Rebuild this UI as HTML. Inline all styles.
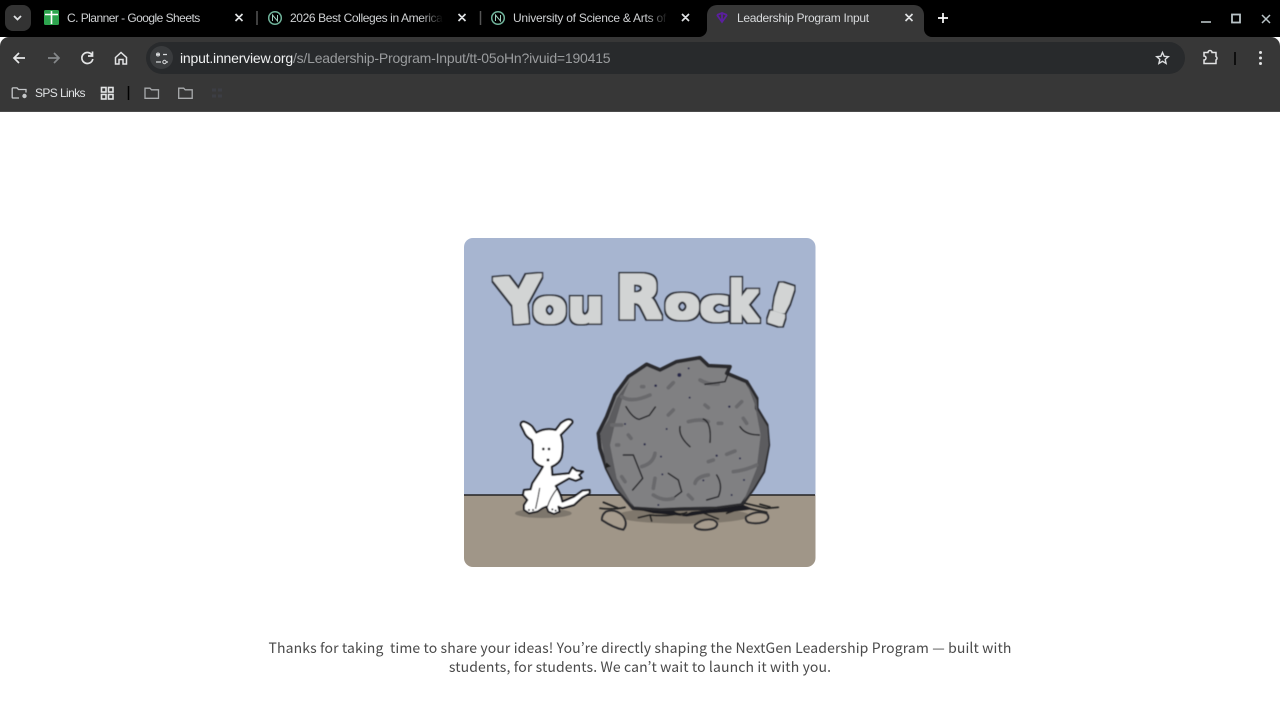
<!DOCTYPE html>
<html><head><meta charset="utf-8"><title>Leadership Program Input</title>
<style>
html,body{margin:0;padding:0;background:#fff;width:1280px;height:719px;overflow:hidden}
body{position:relative;font-family:"Liberation Sans",sans-serif}
.abs{position:absolute}
.tabtxt{position:absolute;top:11px;font-size:12px;line-height:14px;color:#cfd1d3;white-space:nowrap;overflow:hidden}
.fade:after{content:"";position:absolute;right:0;top:0;bottom:0;width:22px;background:linear-gradient(to right,transparent,#000)}
#msg{position:absolute;left:0;width:1280px;top:638.500px;text-align:center;font-family:"Noto Sans CJK JP","Liberation Sans",sans-serif;font-size:14px;line-height:19px;color:#4a4a4a;letter-spacing:.115px;white-space:pre}
</style></head><body>
<div class="abs" style="left:0;top:0;width:1280px;height:37px;background:#000"></div>
<div class="abs" style="left:0;top:37px;width:1280px;height:74px;background:#373737;border-radius:9px 9px 0 0"></div>
<div class="abs" style="left:0;top:111px;width:1280px;height:1px;background:#4b4b4b"></div>
<div class="abs" style="left:707px;top:5px;width:217px;height:32px;background:#373737;border-radius:10px 10px 0 0"></div>
<div class="abs" style="left:146px;top:42px;width:1039px;height:32px;background:#282a2c;border-radius:16px"></div>
<div class="abs" style="left:5px;top:5px;width:26px;height:26px;background:#333;border-radius:8px"></div>
<div class="abs" style="left:150px;top:46px;width:23px;height:23px;background:#3a3c3e;border-radius:50%"></div>

<svg class="abs" style="left:0;top:0" width="1280" height="112" fill="none" stroke="#dfe1e3" stroke-width="1.5">
<path d="M699 37a8 8 0 0 0 8-8v8zM932 37a8 8 0 0 1-8-8v8z" fill="#373737" stroke="none"/>
<path d="M14 16l3.500 3.500L21 16" stroke-width="1.800"/>
<rect x="44" y="10" width="15" height="15" rx="1.500" fill="#2da44e" stroke="none"/>
<path d="M45 14.500h13M51.500 11v13" stroke="#fff" stroke-width="1.600"/>
<path d="M235.500 14l7 7M242.500 14l-7 7M458.500 14l7 7M465.500 14l-7 7M682 14l7 7M689 14l-7 7M905.500 14l7 7M912.500 14l-7 7" stroke-width="1.700"/>
<path d="M257 11v14M480.500 11v14" stroke="#555"/>
<circle cx="275" cy="18" r="6.300" stroke="#6fb39a"/><path d="M272.500 21v-6l5 6v-6" stroke="#9fd0be" stroke-width="1"/>
<circle cx="498" cy="18" r="6.300" stroke="#6fb39a"/><path d="M495.500 21v-6l5 6v-6" stroke="#9fd0be" stroke-width="1"/>
<path d="M717 15l5-2 5 2M717 15l5 7 5-7M722 13v9" stroke="#5b1f9e" stroke-width="1.800"/>
<path d="M943 13v10M938 18h10" stroke="#fff" stroke-width="1.700"/>
<path d="M1201 22h10" stroke="#b9c3c7" stroke-width="1.600"/>
<rect x="1232" y="14.500" width="8" height="8" stroke="#b9c3c7" stroke-width="1.800"/>
<path d="M1262 15l8 8M1270 15l-8 8" stroke="#b9c3c7" stroke-width="1.500"/>
<path d="M25 58H14M19 53l-5 5 5 5" stroke="#e6e7e8" stroke-width="1.700"/>
<path d="M48 58h11M54 53l5 5-5 5" stroke="#85888a" stroke-width="1.700"/>
<path d="M92 55a5.500 5.500 0 1 0 .8 4M92.500 51.500v4.500h-4.500" stroke="#e3e4e5" stroke-width="1.700"/>
<path d="M115.500 57.500l5.500-5 5.500 5v6.500h-3.500v-4.500h-4v4.500h-3.500z" stroke="#e3e4e5" stroke-width="1.500"/>
<path d="M156 54.500h4M163 54.500h4M156 62h5M166 62h2" stroke="#d8dadc" stroke-width="1.300"/><circle cx="158" cy="54.500" r="1.500" stroke="#d8dadc" stroke-width="1"/><circle cx="164.500" cy="62" r="1.700" stroke="#d8dadc" stroke-width="1"/>
<path d="M1162.500 52.500l1.700 3.800 4.100.4-3.100 2.700.9 4-3.600-2.100-3.600 2.100.9-4-3.100-2.700 4.100-.4z" stroke="#dcdee0" stroke-width="1.400"/>
<path d="M1204 53.500h4a2 2 0 0 1 4 0h4v4a2 2 0 0 1 0 3.500v3.500h-12v-3.500a2 2 0 0 0 0-4z" stroke="#e3e4e5" stroke-width="1.500" transform="translate(0,-1)"/>
<path d="M1235 52v13" stroke="#000" stroke-width="1.500"/>
<circle cx="1260.500" cy="52.500" r="1.500" fill="#e3e4e5" stroke="none"/><circle cx="1260.500" cy="58" r="1.500" fill="#e3e4e5" stroke="none"/><circle cx="1260.500" cy="63.500" r="1.500" fill="#e3e4e5" stroke="none"/>
<path d="M19 98h-6a.8.8 0 0 1-.8-.8v-8.500a.8.8 0 0 1 .8-.8h4l1.500 1.600h7.500v3" stroke="#c6c8ca" stroke-width="1.300"/>
<circle cx="24.500" cy="96" r="2.200" fill="#c6c8ca" stroke="none"/>
<g stroke="#e3e4e5" stroke-width="1.600"><rect x="101.500" y="87.500" width="4.500" height="4.500"/><rect x="108.500" y="87.500" width="4.500" height="4.500"/><rect x="101.500" y="94.500" width="4.500" height="4.500"/><rect x="108.500" y="94.500" width="4.500" height="4.500"/></g>
<path d="M128.500 86v14" stroke="#000" stroke-width="1.500"/>
<path d="M145 88.200h5l1.500 1.600h7v8.500h-13.500z M178.700 88.200h5l1.500 1.600h7v8.500h-13.500z" stroke="#a9abad" stroke-width="1.300"/>
<path d="M212 90h10M212 96h10" stroke="#3c3e44" stroke-width="3" stroke-dasharray="4 2"/>
</svg>

<div class="tabtxt" style="left:67px;width:150px;letter-spacing:-.54px">C. Planner - Google Sheets</div>
<div class="tabtxt fade" style="left:290px;width:153px;letter-spacing:-.38px">2026 Best Colleges in America</div>
<div class="tabtxt fade" style="left:513px;width:155px;letter-spacing:-.25px">University of Science &amp; Arts of Oklahoma</div>
<div class="tabtxt" style="left:737px;width:150px;color:#d8dadc;letter-spacing:-.29px">Leadership Program Input</div>
<div class="abs" style="left:180px;top:50px;font-size:14px;line-height:16px;white-space:nowrap;letter-spacing:-.2px;color:#f0f1f2">input.innerview.org<span style="color:#9a9c9e;letter-spacing:-.2px">/s/Leadership-Program-Input/tt-05oHn?ivuid=190415</span></div>
<div class="abs" style="left:35px;top:86px;font-size:12px;line-height:14px;letter-spacing:-.6px;color:#dfe1e3;white-space:nowrap">SPS Links</div>

<svg class="abs" style="left:464px;top:238px" width="352" height="330" viewBox="464 238 352 330">
<defs>
<clipPath id="c"><rect x="464" y="238" width="351.500" height="329" rx="9"/></clipPath>
<filter id="fat" x="-5%" y="-20%" width="110%" height="140%">
<feMorphology in="SourceAlpha" operator="dilate" radius="2.800" result="o"/>
<feFlood flood-color="#2b2e38" result="dc"/>
<feComposite in="dc" in2="o" operator="in" result="d"/>
<feMorphology in="SourceAlpha" operator="dilate" radius="1.300" result="i"/>
<feFlood flood-color="#d2d4d4" result="lc"/>
<feComposite in="lc" in2="i" operator="in" result="l"/>
<feMerge result="m"><feMergeNode in="d"/><feMergeNode in="l"/></feMerge>
<feGaussianBlur in="m" stdDeviation=".5"/>
</filter>
<filter id="soft" x="-5%" y="-5%" width="110%" height="110%"><feGaussianBlur stdDeviation=".55"/></filter>
</defs>
<g clip-path="url(#c)">
<rect x="464" y="238" width="352" height="258" fill="#a7b5d0"/>
<rect x="464" y="495" width="352" height="73" fill="#a09688"/>
<path d="M464 495H815" stroke="#222" stroke-width="1.600"/>
<g font-family="'DejaVu Sans',sans-serif" font-weight="700" fill="#000" filter="url(#fat)">
<text font-size="62" transform="translate(499,324) rotate(-5)">Y</text>
<text font-size="44" transform="translate(533,322) scale(1.1,1)">o</text>
<text font-size="44" transform="translate(568,322) scale(1.13,1)">u</text>
<text font-size="59" transform="translate(616,318)">R</text>
<text font-size="42" transform="translate(665,318) scale(1.2,1)">o</text>
<text font-size="42" transform="translate(700,320) scale(1.2,1)">c</text>
<text font-size="55" transform="translate(729,321) scale(.78,1)">k</text>
<text font-size="53" transform="translate(760,318) rotate(18) scale(1.3,1)">!</text>
</g>
<g filter="url(#soft)">
<g transform="translate(500,345) scale(.33333)">
<ellipse cx="130" cy="505" rx="85" ry="14" fill="#7d766c"/>
<ellipse cx="550" cy="512" rx="200" ry="24" fill="#7f776c"/>
<path d="M295 265L320 215 345 150 385 95 440 58 480 75 530 50 600 38 625 62 690 65 680 85 740 110 770 160 770 190 800 240 805 300 790 380 760 430 725 480 650 490 550 492 480 495 400 490 350 430 320 370 300 310Z" fill="#808082" stroke="#2a2a2d" stroke-width="11" stroke-linejoin="round"/>
<path d="M300 265L325 225 350 160 390 105 370 150 345 235 330 300 350 400 400 485 350 430 320 370Z M740 115L770 165 772 195 802 245 806 300 790 380 760 430 730 470 770 370 782 270 765 180Z" fill="#5c5c5f"/>
<g fill="none" stroke="#69696c" stroke-width="11" stroke-linecap="round" stroke-linejoin="round">
<path d="M365 155q30 20 85-5M505 128l15-15M600 105q25 15 55 12M615 180l10 8M505 210l15-15M710 185l15-15M565 230q40-10 60 0M655 235h10M730 220l10 15M335 240h30M385 270l8 10M350 300h6M465 325q-5 30-40 40M625 350l15-5M680 328l25-10M700 380q40-5 70-20M365 395l10 15M465 400l-5 30M460 450q30 20 60 10M565 450l12 12M585 415q5-20 40-25M425 125h6"/>
</g>
<g fill="none" stroke="#26262a" stroke-width="4.500" stroke-linecap="round" stroke-linejoin="round">
<path d="M378 185q20 35 40 38l30-12 18-25M690 72l-15 38-60 8M540 245q-5 30 30 60M610 222q25 10 20 70M720 245q15 25 58 25M370 330h30l28 70-30 35M505 385l30 20 10 35-20 15M650 390q20 30 5 65l-35 10"/>
</g>
<g fill="#26284a"><circle cx="538" cy="90" r="6"/><circle cx="566" cy="70" r="3"/><circle cx="467" cy="122" r="4"/><circle cx="569" cy="158" r="3"/><circle cx="688" cy="185" r="3.500"/><circle cx="375" cy="237" r="3"/><circle cx="500" cy="252" r="3"/><circle cx="434" cy="298" r="3.500"/><circle cx="483" cy="335" r="3"/><circle cx="650" cy="332" r="3.500"/><circle cx="720" cy="340" r="3"/><circle cx="487" cy="388" r="3"/><circle cx="610" cy="406" r="3"/><circle cx="732" cy="405" r="3"/><circle cx="475" cy="480" r="3"/><circle cx="695" cy="450" r="3"/></g>
<path d="M315 370l18-6-14-12Z" fill="#222"/>
<g fill="none" stroke="#222" stroke-width="5" stroke-linecap="round" stroke-linejoin="round">
<path d="M300 490q40 5 75-3M310 472l45 18M735 475l65 15 35-3M745 490l55 12M780 478l30 8M415 518l35-8 5 18M450 510q50 5 80-3l30 2 50-5 45 18M680 505l30-10M520 500q20 12 40 2"/>
</g>
<path d="M400 490Q480 500 520 498L545 512 575 500 650 492 730 480 760 492 700 500 620 505 560 515 520 510 460 505Z" fill="#1e1e20"/>
<path d="M318 500Q345 490 368 512Q385 535 370 554Q340 548 306 525Q305 510 318 500Z" fill="#a69b8d" stroke="#2a2a2d" stroke-width="6"/>
<path d="M585 540Q610 518 640 525Q660 535 645 548Q620 558 595 552Q582 548 585 540Z" fill="#a69b8d" stroke="#2a2a2d" stroke-width="6"/>
<path d="M738 515Q770 495 800 506Q812 520 795 530Q770 538 745 532Q735 525 738 515Z" fill="#a69b8d" stroke="#2a2a2d" stroke-width="6"/>
</g>
<g transform="translate(519,410) scale(.33333)">
<path d="M5 45Q5 35 15 35Q30 40 40 50L52 68Q80 52 110 60L125 40Q140 28 150 28Q162 30 160 38L145 55 125 75Q135 100 128 140Q122 160 98 170L100 195 150 190 160 172 172 182 192 185 180 195 188 205 170 212 150 205 110 228Q125 250 130 275L165 260 190 242 212 240 212 250 190 262 165 285 130 295 118 290 122 305 105 312 88 305 82 290 70 295 55 305 30 310 15 300 15 285 25 270 12 255 15 240 35 238 40 220 60 190 72 170Q50 165 42 145L42 105 38 90Q20 80 15 65Z" fill="#fff" stroke="#15151a" stroke-width="6" stroke-linejoin="round"/>
<g fill="#15151a"><circle cx="73" cy="117" r="4"/><circle cx="90" cy="117" r="4"/><circle cx="87" cy="150" r="4.500"/><circle cx="30" cy="300" r="3"/><circle cx="42" cy="300" r="3"/><circle cx="100" cy="298" r="3"/><circle cx="110" cy="302" r="3"/></g>
<path d="M62 235q-5 30-12 60M115 235q-20 25-30 55" fill="none" stroke="#15151a" stroke-width="3.500" stroke-linecap="round"/>
</g>
</g>
</g>
</svg>

<div id="msg">Thanks for taking  time to share your ideas! You’re directly shaping the NextGen Leadership Program — built with
students, for students. We can’t wait to launch it with you.</div>
</body></html>
